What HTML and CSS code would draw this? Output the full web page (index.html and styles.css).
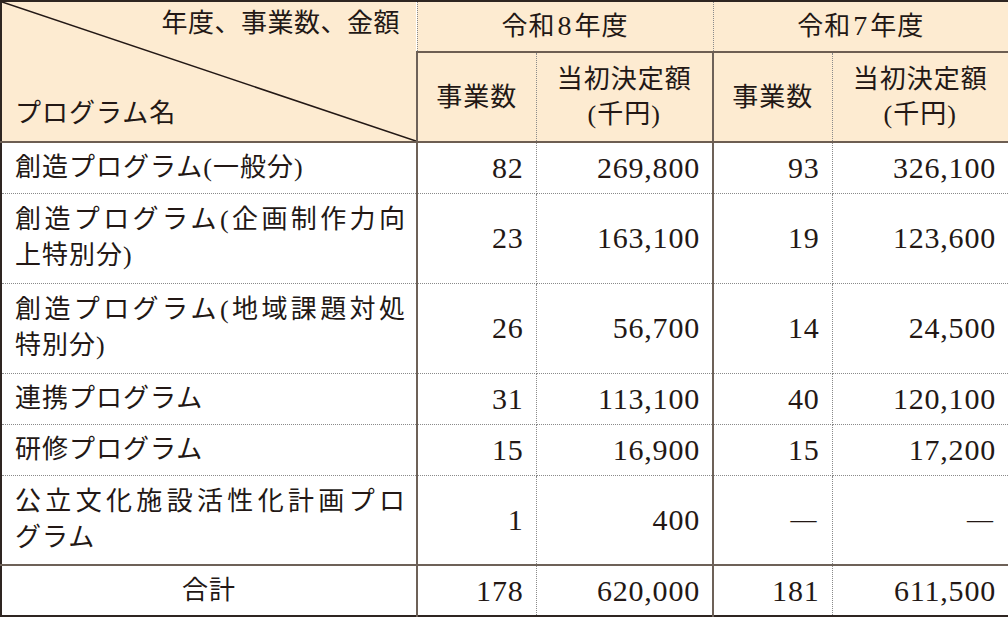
FILE: index.html
```html
<!DOCTYPE html>
<html lang="ja">
<head>
<meta charset="utf-8">
<link rel="stylesheet" href="styles.css">
</head>
<body>
<table class="grid">
  <colgroup>
    <col class="w-name"><col class="w-cnt"><col class="w-amt"><col class="w-cnt"><col class="w-amt">
  </colgroup>
  <thead>
    <tr class="h1">
      <th class="corner" rowspan="2">
        <svg class="diag" viewBox="0 0 100 100" preserveAspectRatio="none"><line x1="0" y1="0" x2="100" y2="100" vector-effect="non-scaling-stroke"/></svg>
        <div class="corner-in">
          <span class="corner-top">年度、事業数、金額</span>
          <span class="corner-bot">プログラム名</span>
        </div>
      </th>
      <th class="year" colspan="2">令和<span class="yd">8</span>年度</th>
      <th class="year" colspan="2">令和<span class="yd">7</span>年度</th>
    </tr>
    <tr class="h2">
      <th class="sub first">事業数</th>
      <th class="sub">当初決定額<br>(千円)</th>
      <th class="sub first">事業数</th>
      <th class="sub">当初決定額<br>(千円)</th>
    </tr>
  </thead>
  <tbody>
    <tr class="r1">
      <td class="name">創造プログラム(一般分)</td>
      <td class="num first">82</td><td class="num">269,800</td>
      <td class="num first">93</td><td class="num">326,100</td>
    </tr>
    <tr class="r2">
      <td class="name"><span class="jl">創造プログラム(企画制作力向</span>上特別分)</td>
      <td class="num first">23</td><td class="num">163,100</td>
      <td class="num first">19</td><td class="num">123,600</td>
    </tr>
    <tr class="r2">
      <td class="name"><span class="jl">創造プログラム(地域課題対処</span>特別分)</td>
      <td class="num first">26</td><td class="num">56,700</td>
      <td class="num first">14</td><td class="num">24,500</td>
    </tr>
    <tr class="r1">
      <td class="name">連携プログラム</td>
      <td class="num first">31</td><td class="num">113,100</td>
      <td class="num first">40</td><td class="num">120,100</td>
    </tr>
    <tr class="r1">
      <td class="name">研修プログラム</td>
      <td class="num first">15</td><td class="num">16,900</td>
      <td class="num first">15</td><td class="num">17,200</td>
    </tr>
    <tr class="r2">
      <td class="name"><span class="jl">公立文化施設活性化計画プロ</span>グラム</td>
      <td class="num first">1</td><td class="num">400</td>
      <td class="num first dash">—</td><td class="num dash">—</td>
    </tr>
    <tr class="r1 total">
      <td class="name center">合計</td>
      <td class="num first">178</td><td class="num">620,000</td>
      <td class="num first">181</td><td class="num">611,500</td>
    </tr>
  </tbody>
</table>
</body>
</html>
```

FILE: styles.css
```css
html, body {
  margin: 0;
  padding: 0;
  background: #ffffff;
}

.grid {
  border-collapse: collapse;
  table-layout: fixed;
  width: 1007px;
  border: 2px solid #2e2521;
  font-family: "Liberation Serif", "Noto Sans CJK JP", serif;
  font-size: 26px;
  line-height: 36px;
  color: #231815;
  letter-spacing: 1px;
}

.w-name { width: 416px; }
.w-cnt { width: 119px; }
.w-amt { width: 177px; }

.grid th,
.grid td {
  border: 1px dotted #8a8a8a;
  padding: 0;
  font-weight: 400;
}

.grid thead th {
  background: #fdebd1;
  border-bottom: 2px solid #6d5e52;
}

.h1 { height: 51px; }
.h2 { height: 90px; }
.r1 { height: 51px; }
.r2 { height: 90px; }

.corner {
  position: relative;
  border-right: 2px solid #6d6158;
  text-align: left;
  vertical-align: top;
}

.diag {
  position: absolute;
  left: 0;
  top: 0;
  width: 100%;
  height: 100%;
}

.diag line {
  stroke: #231815;
  stroke-width: 1.6;
}

.corner-in {
  height: 126px;
  padding: 4px 16px 9px 13px;
  display: flex;
  flex-direction: column;
  justify-content: space-between;
}

.corner-top {
  align-self: flex-end;
  letter-spacing: 0.5px;
}

.corner-bot { align-self: flex-start; }

.year {
  text-align: center;
  vertical-align: middle;
  border-left: 2px solid #6d6158;
  border-bottom: 2px solid #6d6158;
}

.yd {
  font-size: 28px;
  padding: 0 2px;
}

.sub {
  text-align: center;
  vertical-align: middle;
  line-height: 35px;
}

.grid .first {
  border-left: 2px solid #6d6158;
}

.name {
  text-align: left;
  vertical-align: middle;
  padding: 0 10px 0 13px !important;
  border-right: 2px solid #6d6158;
}

.name.center {
  text-align: center;
  padding: 0 !important;
}

.jl {
  display: block;
  text-align: justify;
  text-align-last: justify;
}

.num {
  text-align: right;
  vertical-align: middle;
  font-size: 30px;
  letter-spacing: 0.8px;
  padding-right: 12px !important;
}

.dash {
  font-size: 26px;
  letter-spacing: 0;
  padding-right: 15px !important;
}

.total td {
  border-top: 2px solid #6d6158;
}
```
